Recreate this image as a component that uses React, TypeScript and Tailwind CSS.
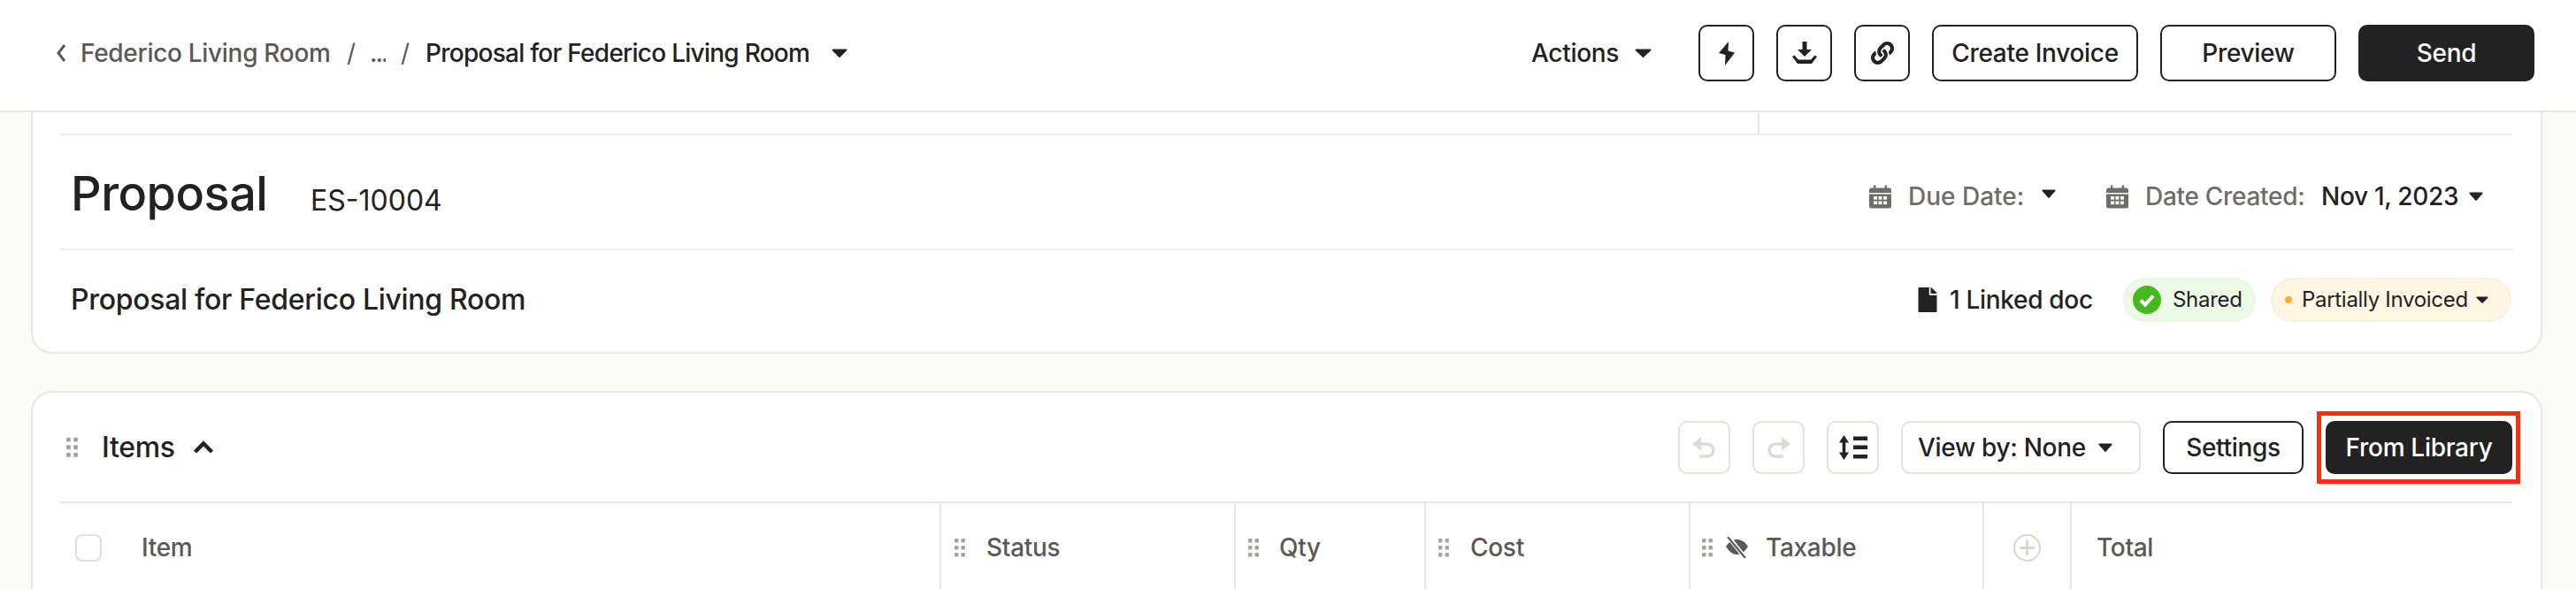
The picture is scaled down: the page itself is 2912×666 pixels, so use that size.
import React from "react";
import { FaFile, FaLink } from "react-icons/fa";

const Caret = ({ w = 18, h = 10, className = "" }: { w?: number; h?: number; className?: string }) => (
  <svg width={w} height={h} viewBox="0 0 18 10" className={className} preserveAspectRatio="none">
    <path d="M1.5 0.5h15a1 1 0 0 1 .8 1.6L9.8 9.4a1 1 0 0 1-1.6 0L.7 2.1A1 1 0 0 1 1.5.5z" fill="#222" />
  </svg>
);

const Grip = ({ big = false }: { big?: boolean }) => (
  <svg width={big ? 13 : 12} height={big ? 24 : 21} viewBox="0 0 12 21" fill="#a5a49c">
    <rect x="0" y="0" width="4.5" height="4.5" rx="1" />
    <rect x="7.5" y="0" width="4.5" height="4.5" rx="1" />
    <rect x="0" y="8" width="4.5" height="4.5" rx="1" />
    <rect x="7.5" y="8" width="4.5" height="4.5" rx="1" />
    <rect x="0" y="16" width="4.5" height="4.5" rx="1" />
    <rect x="7.5" y="16" width="4.5" height="4.5" rx="1" />
  </svg>
);

const Calendar = () => (
  <svg width="25" height="27" viewBox="0 0 25 27">
    <path d="M5 0.5h2.4v3H17.6v-3H20v3h2.5A2.5 2.5 0 0 1 25 6v3H0V6a2.5 2.5 0 0 1 2.5-2.5H5z" fill="#6e6d67" />
    <path d="M0 10.5h25V24a2.5 2.5 0 0 1-2.5 2.5h-20A2.5 2.5 0 0 1 0 24z" fill="#6e6d67" />
    <g fill="#fff">
      <rect x="5" y="13" width="4" height="3.6" />
      <rect x="10.5" y="13" width="4" height="3.6" />
      <rect x="16" y="13" width="4" height="3.6" />
      <rect x="5" y="18.5" width="4" height="3.6" />
      <rect x="10.5" y="18.5" width="4" height="3.6" />
      <rect x="16" y="18.5" width="4" height="3.6" />
    </g>
  </svg>
);

const IconBtn = ({ children }: { children: React.ReactNode }) => (
  <button className="flex h-[64px] w-[63px] items-center justify-center rounded-[10px] border-2 border-[#222] bg-white">
    {children}
  </button>
);

const GhostBtn = ({ children }: { children: React.ReactNode }) => (
  <button className="flex h-[60px] w-[59px] items-center justify-center rounded-[10px] border-2 border-[#e4e2da] bg-white">
    {children}
  </button>
);

const Head = ({ w, children, className = "" }: { w: string; children: React.ReactNode; className?: string }) => (
  <div className={`flex h-full items-center text-[28px] font-medium tracking-[-0.3px] text-[#5a5955] ${w} ${className}`}>{children}</div>
);

export default function App() {
  return (
    <div className="flex h-[666px] w-[2912px] flex-col overflow-hidden bg-[#fafaf7] text-[#222] [font-family:Inter,'Liberation_Sans',sans-serif]">
      <header className="flex h-[127px] shrink-0 items-center border-b-2 border-[#e6e5df] bg-white pb-[5px] pl-[63px] pr-[47px]">
        <div className="flex items-center text-[28px] font-medium tracking-[-0.3px]">
          <svg width="12" height="22" viewBox="0 0 12 22" className="mr-[16px]" fill="none" stroke="#5a5955" strokeWidth="3">
            <path d="M10 2L3 11l7 9" />
          </svg>
          <span className="w-[283px] whitespace-nowrap text-[#5a5955]">Federico Living Room</span>
          <span className="ml-[18px] w-[8px] font-normal text-[#5a5955]">/</span>
          <span className="ml-[18px] w-[18px] overflow-hidden tracking-[-2px] text-[#5a5955]">...</span>
          <span className="ml-[17px] w-[8px] font-normal text-[#5a5955]">/</span>
          <span className="ml-[20px] w-[437px] whitespace-nowrap tracking-[-0.74px]">Proposal for Federico Living Room</span>
          <Caret className="ml-[22px]" />
        </div>
        <div className="ml-auto flex items-center">
          <span className="w-[97px] whitespace-nowrap text-[28px] font-medium tracking-[-0.3px]">Actions</span>
          <Caret className="ml-[20px] mr-[53px]" w={19} />
          <div className="flex items-center gap-[25px]">
            <IconBtn>
              <svg width="18" height="27" viewBox="0 0 18 27"><path d="M11 0L0 13l7.500 2L7 27 18 12.500l-7.500-2z" fill="#222" /></svg>
            </IconBtn>
            <IconBtn>
              <svg width="28" height="26" viewBox="0 0 28 26" fill="#222">
                <path d="M11.500 0h5v9H22l-8 8-8-8h5.500z" />
                <path d="M0 17l2.500-1.500L7 20.500h14l4.500-5L28 17l-6 8H6z" />
              </svg>
            </IconBtn>
            <IconBtn>
              <FaLink size={26} color="#222" />
            </IconBtn>
            <button className="h-[64px] w-[233px] whitespace-nowrap rounded-[10px] border-2 border-[#222] bg-white text-[28px] font-medium tracking-[-0.3px]">Create Invoice</button>
            <button className="h-[64px] w-[199px] rounded-[10px] border-2 border-[#222] bg-white text-[28px] font-medium tracking-[-0.3px]">Preview</button>
            <button className="h-[64px] w-[199px] rounded-[10px] bg-[#222] text-[28px] font-medium tracking-[-0.3px] text-white">Send</button>
          </div>
        </div>
      </header>

      <main className="flex flex-col gap-[42px] pl-[35px] pr-[38px]">
        <section className="flex h-[273px] flex-col rounded-b-[24px] border-x-2 border-b-2 border-[#e8e7e1] bg-white px-[31px]">
          <div className="box-content flex h-[24px] border-b-2 border-[#efeee9]">
            <div className="ml-[1919px] w-[2px] bg-[#e8e7e1]" />
          </div>
          <div className="box-content flex h-[128px] items-center border-b-2 border-[#efeee9] pl-[12px] pr-[34px]">
            <h1 className="mt-[4px] w-[271px] text-[54px] font-medium leading-none tracking-[-0.5px]">Proposal</h1>
            <span className="mt-[19px] w-[148px] whitespace-nowrap text-[32px] leading-none">ES-10004</span>
            <div className="ml-auto mt-[10px] flex items-center text-[28px] font-medium">
              <Calendar />
              <span className="ml-[19px] w-[127px] whitespace-nowrap text-[#6e6d67]">Due Date:</span>
              <Caret className="-mt-[6px] ml-[24px] mr-[57px]" w={16} h={10} />
              <Calendar />
              <span className="ml-[19px] w-[181px] whitespace-nowrap tracking-[-0.3px] text-[#6e6d67]">Date Created:</span>
              <span className="ml-[18px] w-[154px] whitespace-nowrap tracking-[-0.3px]">Nov 1, 2023</span>
              <Caret className="ml-[13px]" w={16} h={10} />
            </div>
          </div>
          <div className="flex flex-1 items-center pb-[4px] pl-[12px] pr-[2px]">
            <span className="w-[512px] whitespace-nowrap text-[32px] font-medium tracking-[-0.3px]">Proposal for Federico Living Room</span>
            <div className="ml-auto flex items-center">
              <FaFile size={28} color="#222" />
              <span className="ml-[11px] mr-[36px] w-[160px] whitespace-nowrap text-[28px] font-medium tracking-[-0.3px]">1 Linked doc</span>
              <div className="flex h-[50px] w-[150px] items-center rounded-full border-2 border-[#eef4e8] bg-[#ebf9e6] pl-[9px]">
                <svg width="32" height="32" viewBox="0 0 32 32">
                  <circle cx="16" cy="16" r="16" fill="#45b91f" />
                  <path d="M9 16.500l5 5 9-10" fill="none" stroke="#fff" strokeWidth="4" />
                </svg>
                <span className="ml-[13px] text-[24px] leading-none tracking-[-0.3px]">Shared</span>
              </div>
              <div className="ml-[17px] flex h-[50px] w-[272px] items-center rounded-full border-2 border-[#f6f1e3] bg-[#fef5e3] pl-[14px]">
                <span className="h-[8px] w-[8px] rounded-full bg-[#fbb12c]" />
                <span className="ml-[11px] w-[187px] whitespace-nowrap text-[24px] leading-none tracking-[-0.3px]">Partially Invoiced</span>
                <Caret className="ml-[10px]" w={14} h={8} />
              </div>
            </div>
          </div>
        </section>

        <section className="flex flex-col rounded-t-[24px] border-x-2 border-t-2 border-[#e8e7e1] bg-white pb-[200px] pl-[31px] pr-[32px]">
          <div className="box-content flex h-[123px] items-center border-b-2 border-[#e8e7e1]">
            <div className="ml-[7px]"><Grip big /></div>
            <span className="ml-[27px] w-[83px] whitespace-nowrap text-[32px] font-medium tracking-[-0.3px]">Items</span>
            <svg width="24" height="15" viewBox="0 0 24 15" className="ml-[20px]" fill="none" stroke="#222" strokeWidth="4.500">
              <path d="M2.500 13L12 3.500 21.500 13" />
            </svg>
            <div className="ml-auto flex items-center">
              <div className="flex gap-[25px]">
                <GhostBtn>
                  <svg width="27" height="24" viewBox="0 0 27 24" fill="none">
                    <path d="M0 8L10 0v16z" fill="#dedcd2" />
                    <path d="M8 8h9a7 7 0 0 1 0 14H8" stroke="#dedcd2" strokeWidth="3.500" />
                  </svg>
                </GhostBtn>
                <GhostBtn>
                  <svg width="27" height="24" viewBox="0 0 27 24" fill="none">
                    <path d="M27 8L17 0v16z" fill="#dedcd2" />
                    <path d="M19 8h-9a7 7 0 0 0 0 14h9" stroke="#dedcd2" strokeWidth="3.500" />
                  </svg>
                </GhostBtn>
                <GhostBtn>
                  <svg width="32" height="28" viewBox="0 0 32 28" fill="#222">
                    <path d="M5.500 0L11 8.500H7.300v11H11L5.500 28 0 19.500h3.700v-11H0z" />
                    <rect x="16" y="1.500" width="16" height="4.500" />
                    <rect x="16" y="11.500" width="16" height="4.500" />
                    <rect x="16" y="22" width="16" height="4.500" />
                  </svg>
                </GhostBtn>
                <button className="flex h-[60px] w-[271px] items-center rounded-[10px] border-2 border-[#e4e2da] bg-white pl-[17px]">
                  <span className="w-[190px] whitespace-nowrap text-left text-[28px] font-medium tracking-[-0.3px]">View by: None</span>
                  <Caret className="ml-[14px]" w={16} h={10} />
                </button>
              </div>
              <button className="ml-[25px] h-[60px] w-[159px] rounded-[10px] border-2 border-[#222] bg-white text-[28px] font-medium tracking-[-0.3px]">Settings</button>
              <div className="relative ml-[25px]">
                <button className="h-[60px] w-[211px] whitespace-nowrap rounded-[10px] bg-[#222] text-[28px] font-medium tracking-[-0.3px] text-white">From Library</button>
                <div className="pointer-events-none absolute -bottom-[11px] -left-[10px] -right-[9px] -top-[11px] border-[5px] border-[#f5300f]" />
              </div>
            </div>
          </div>

          <div className="flex h-[100px]">
            <Head w="w-[994px]">
              <span className="ml-[17px] h-[31px] w-[30px] rounded-[8px] border-2 border-[#e0dfd6]" />
              <span className="ml-[45px] w-[59px] whitespace-nowrap">Item</span>
            </Head>
            <Head w="w-[333px]" className="border-l-2 border-[#e8e7e1] pl-[15px]">
              <Grip />
              <span className="ml-[24px] whitespace-nowrap">Status</span>
            </Head>
            <Head w="w-[215px]" className="border-l-2 border-[#e8e7e1] pl-[14px]">
              <Grip />
              <span className="ml-[23px] whitespace-nowrap">Qty</span>
            </Head>
            <Head w="w-[299px]" className="border-l-2 border-[#e8e7e1] pl-[14px]">
              <Grip />
              <span className="ml-[24px] whitespace-nowrap">Cost</span>
            </Head>
            <Head w="w-[332px]" className="border-l-2 border-[#e8e7e1] pl-[13px]">
              <Grip />
              <svg width="25" height="24" viewBox="0 0 25 24" className="ml-[15px]">
                <path d="M0 11C4 5 8 3 12.500 3S21 5 25 11c-4 6-8 9-12.500 9S4 17 0 11z" fill="#5a5955" />
                <path d="M2 -1L22 24" stroke="#fff" strokeWidth="5" />
                <path d="M2 0L22 24" stroke="#5a5955" strokeWidth="2.200" />
              </svg>
              <span className="ml-[20px] whitespace-nowrap">Taxable</span>
            </Head>
            <Head w="w-[99px]" className="justify-center border-l-2 border-[#e8e7e1]">
              <span className="flex h-[31px] w-[31px] items-center justify-center rounded-full border-2 border-[#d9d8ce]">
                <svg width="17" height="17" viewBox="0 0 17 17" fill="#d9d8ce">
                  <rect x="7" y="0" width="3" height="17" />
                  <rect x="0" y="7" width="17" height="3" />
                </svg>
              </span>
            </Head>
            <Head w="w-[500px]" className="border-l-2 border-[#e8e7e1] pl-[28px]">
              <span className="whitespace-nowrap">Total</span>
            </Head>
          </div>
        </section>
      </main>
    </div>
  );
}
